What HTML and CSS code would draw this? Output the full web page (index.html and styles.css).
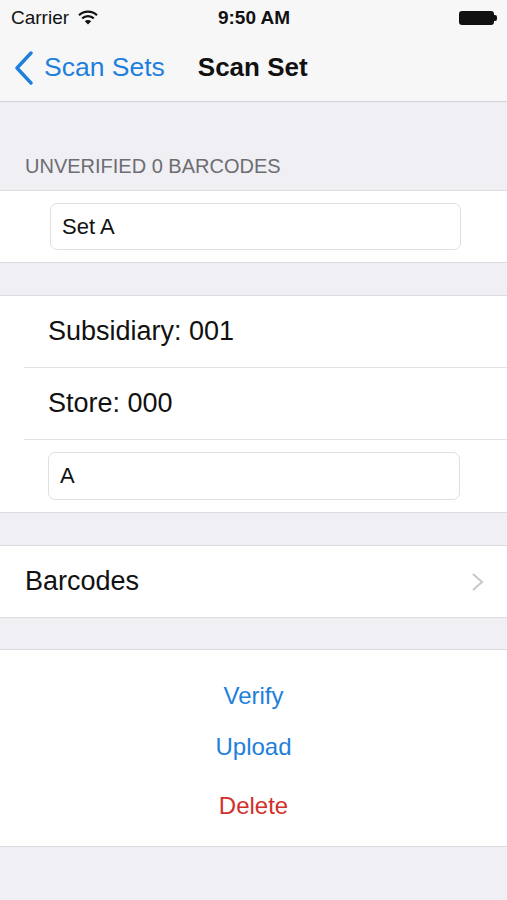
FILE: index.html
```html
<!DOCTYPE html>
<html lang="en">
<head>
  <meta charset="UTF-8">
  <meta name="viewport" content="width=device-width, initial-scale=1.0">
  <title>Scan Set</title>
  <link rel="stylesheet" href="styles.css">
</head>
<body>

  <div class="topbar">
    <div class="status">
      <div class="status-left">
        <span>Carrier</span>
        <svg class="wifi" width="20" height="15" viewBox="0 0 20 15">
          <path d="M1 5.2 A13 13 0 0 1 19 5.2" fill="none" stroke="#111" stroke-width="2.2"/>
          <path d="M4.2 8.4 A8.5 8.5 0 0 1 15.8 8.4" fill="none" stroke="#111" stroke-width="2.2"/>
          <path d="M10 14.5 L6.8 11.3 A4.6 4.6 0 0 1 13.2 11.3 Z" fill="#111"/>
        </svg>
      </div>
      <div class="clock">9:50 AM</div>
      <div class="status-right">
        <div class="battery"><div class="battery-body"></div><div class="battery-nub"></div></div>
      </div>
    </div>
    <div class="nav">
      <div class="back">
        <svg width="20" height="34" viewBox="0 0 20 34">
          <path d="M17 2 L3 17 L17 32" fill="none" stroke="#1f7fdc" stroke-width="3.4" stroke-linecap="round" stroke-linejoin="round"/>
        </svg>
        <span>Scan Sets</span>
      </div>
      <div class="title">Scan Set</div>
    </div>
  </div>

  <div class="section-header">UNVERIFIED 0 BARCODES</div>
  <div class="group">
    <div class="cell field-cell first-field">
      <input type="text" value="Set A">
    </div>
  </div>

  <div class="spacer"></div>
  <div class="group">
    <div class="cell indented">Subsidiary: 001</div>
    <div class="cell indented">Store: 000</div>
    <div class="cell field-cell last-field">
      <input type="text" value="A">
    </div>
  </div>

  <div class="spacer"></div>
  <div class="group">
    <div class="cell link">
      <span>Barcodes</span>
      <svg width="14" height="20" viewBox="0 0 14 20">
        <path d="M2 2 L11 10 L2 18" fill="none" stroke="#c7c7cc" stroke-width="2"/>
      </svg>
    </div>
  </div>

  <div class="spacer short"></div>
  <div class="group actions">
    <div class="action verify">Verify</div>
    <div class="action upload">Upload</div>
    <div class="action delete">Delete</div>
  </div>

</body>
</html>
```

FILE: styles.css
```css
body {
  margin: 0;
  background: #efeff4;
  font-family: "Liberation Sans", Arial, sans-serif;
  color: #111;
}

.topbar {
  background: #f7f7f8;
  border-bottom: 1px solid #d4d4d8;
  height: 101px;
}
.status {
  height: 34px;
  display: flex;
  align-items: center;
  padding: 2px 10px 0 11px;
  box-sizing: border-box;
  font-size: 19px;
}
.status-left { flex: 1; display: flex; align-items: center; gap: 9px; }
.wifi { margin-top: -2px; }
.clock { font-weight: bold; }
.status-right { flex: 1; display: flex; justify-content: flex-end; }
.battery { display: flex; align-items: center; }
.battery-body { width: 35px; height: 14px; background: #111; border-radius: 3px; }
.battery-nub { width: 3px; height: 6px; background: #111; border-radius: 0 2px 2px 0; }

.nav {
  height: 67px;
  display: flex;
  align-items: center;
  padding-left: 14px;
}
.back {
  display: flex;
  align-items: center;
  gap: 10px;
  color: #1f7fdc;
  font-size: 26.5px;
}
.title {
  margin-left: 33px;
  font-size: 26px;
  font-weight: bold;
}

.section-header {
  height: 88px;
  box-sizing: border-box;
  display: flex;
  align-items: flex-end;
  padding: 0 0 12px 25px;
  font-size: 20px;
  color: #6d6d72;
}

.group {
  background: #fff;
  border-top: 1px solid #dcdce0;
  border-bottom: 1px solid #dcdce0;
}
.spacer { height: 32px; }
.spacer.short { height: 31px; }

.cell {
  height: 71px;
  display: flex;
  align-items: center;
  font-size: 27px;
}
.indented {
  border-bottom: 1px solid #e2e2e6;
  margin-left: 24px;
  padding-left: 24px;
}
.field-cell { padding: 0 46px 0 50px; }
.last-field { padding-left: 48px; padding-right: 47px; height: 72px; }

input {
  width: 100%;
  height: 47px;
  box-sizing: border-box;
  border: 1px solid #e0e0e3;
  border-radius: 7px;
  padding: 0 11px;
  font-family: "Liberation Sans", Arial, sans-serif;
  font-size: 22px;
  color: #111;
  background: #fff;
  outline: none;
}
.last-field input { height: 48px; }

.link {
  justify-content: space-between;
  padding: 0 22px 0 25px;
}

.actions {
  height: 168px;
  padding-top: 28px;
}
.action {
  text-align: center;
  font-size: 24px;
  line-height: 36px;
  color: #1f7fdc;
}
.upload { margin-top: 15px; }
.delete { margin-top: 23px; color: #d2302c; }
```
